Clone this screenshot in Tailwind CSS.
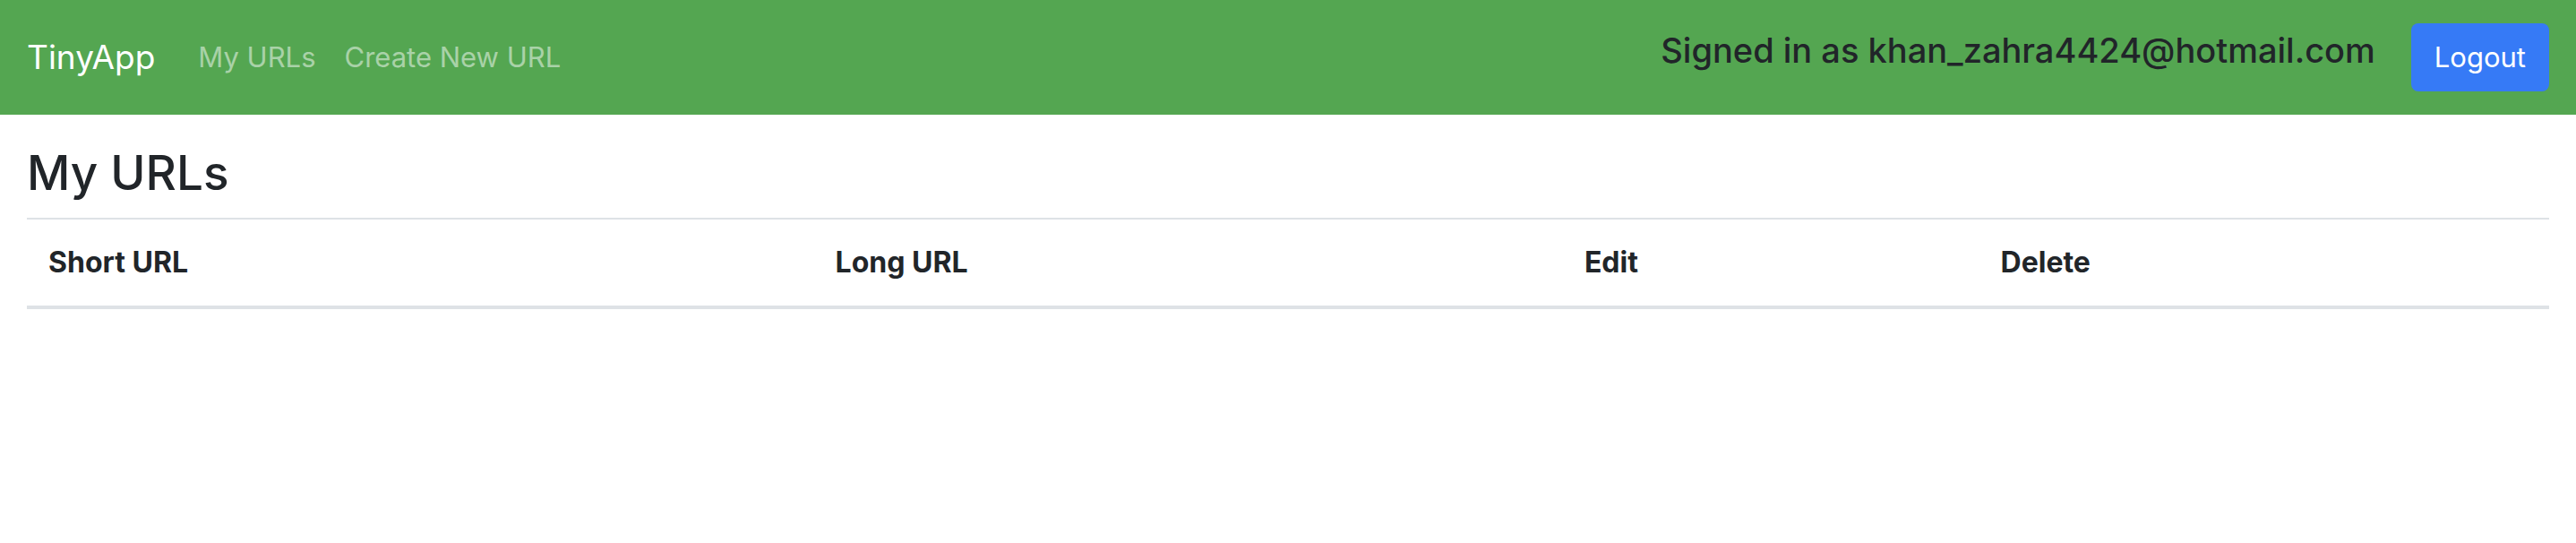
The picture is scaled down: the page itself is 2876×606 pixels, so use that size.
<!DOCTYPE html>
<html lang="en">
<head>
<meta charset="utf-8">
<meta name="viewport" content="width=device-width, initial-scale=1">
<title>TinyApp</title>
<script src="https://cdn.jsdelivr.net/npm/@tailwindcss/browser@4"></script>
</head>
<body class="bg-white font-['Inter',sans-serif] text-[32px] leading-[48px] text-[#212529]">
<header class="flex h-32 items-center bg-[#54a651] px-[30px]">
  <a href="#" class="mr-8 text-[37px] leading-[60px] text-white">TinyApp</a>
  <nav class="flex flex-1 text-[31px] text-white/50">
    <a href="#" class="px-4">My URLs</a>
    <a href="#" class="px-4">Create New URL</a>
  </nav>
  <form class="flex items-center" onsubmit="return false">
    <h5 class="mr-10 pb-4 text-[38px] font-medium leading-[48px]">Signed in as khan_zahra4424@hotmail.com</h5>
    <button type="submit" class="rounded-lg bg-[#367af6] px-[26px] py-[14px] text-[31px] text-white">Logout</button>
  </form>
</header>
<main class="px-[30px] pt-8">
  <h3 class="mb-4 text-[53px] font-medium leading-[67px]">My URLs</h3>
  <table class="w-full table-fixed border-collapse text-left">
    <thead>
      <tr class="border-t-2 border-b-4 border-[#dee2e6]">
        <th scope="col" class="w-[31.2%] p-6 font-bold">Short URL</th>
        <th scope="col" class="w-[29.7%] p-6 font-bold">Long URL</th>
        <th scope="col" class="w-[16.5%] p-6 font-bold">Edit</th>
        <th scope="col" class="p-6 font-bold">Delete</th>
      </tr>
    </thead>
    <tbody></tbody>
  </table>
</main>
</body>
</html>
